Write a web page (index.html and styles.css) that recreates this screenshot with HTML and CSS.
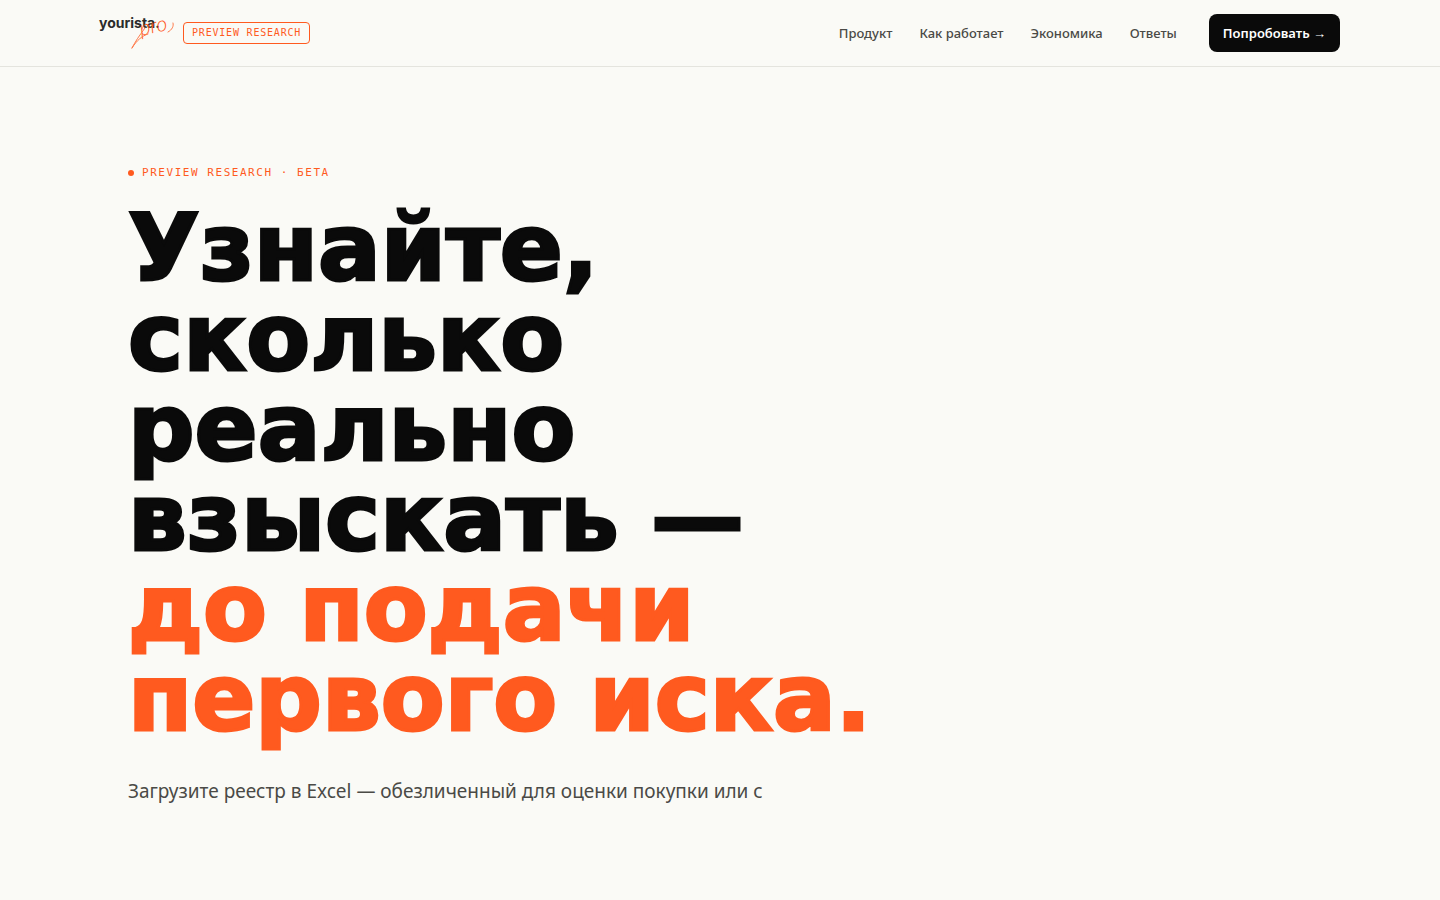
FILE: index.html
```html
<!DOCTYPE html>
<html lang="ru">
<head>
    <meta charset="UTF-8">
    <meta name="viewport" content="width=device-width, initial-scale=1.0">
    <title>yourista pro</title>
    <link rel="stylesheet" href="styles.css">
</head>
<body>
    <!-- Header -->
    <header class="header">
        <div class="header-inner">
            <div class="brand">
                <a href="#" class="brand-link" aria-label="yourista pro">
                    <svg class="logo" width="74" height="34" viewBox="0 0 74 34">
                        <text class="logo-name" x="-1" y="12">yourista.</text>
                        <g transform="rotate(-12 40 20)">
                            <text class="logo-pro" x="41" y="20">pro</text>
                        </g>
                        <path class="logo-stroke" d="M32 32C35 26 39 20 45 12M32 32C37 24 42 20 48 18M68 16C72 14 74 10 73 7"/>
                    </svg>
                </a>
                <span class="badge">PREVIEW RESEARCH</span>
            </div>
            <nav class="nav">
                <a href="#product">Продукт</a>
                <a href="#how">Как работает</a>
                <a href="#economics">Экономика</a>
                <a href="#faq">Ответы</a>
                <a href="#try" class="nav-button">Попробовать →</a>
            </nav>
        </div>
    </header>

    <!-- Hero -->
    <main class="hero">
        <p class="eyebrow"><span class="dot"></span>PREVIEW RESEARCH · БЕТА</p>
        <h1>
            Узнайте,<br>
            сколько<br>
            реально<br>
            взыскать —<br>
            <span class="accent">до подачи<br>
            первого иска.</span>
        </h1>
        <p class="lead">Загрузите реестр в Excel — обезличенный для оценки покупки или с</p>
    </main>
</body>
</html>
```

FILE: styles.css
```css
* {
    margin: 0;
    padding: 0;
    box-sizing: border-box;
}

body {
    font-family: 'Noto Sans', sans-serif;
    background: #fafaf6;
    color: #0a0a0a;
    min-height: 100vh;
}

a {
    color: inherit;
    text-decoration: none;
}

/* Header */
.header {
    border-bottom: 1px solid #e4e4de;
}

.header-inner {
    display: flex;
    justify-content: space-between;
    align-items: center;
    max-width: 1304px;
    margin: 0 auto;
    padding: 14px 32px;
}

.brand {
    display: flex;
    align-items: center;
    gap: 9px;
}

.logo {
    display: block;
    overflow: visible;
}

.logo-name {
    font-family: 'Inter', sans-serif;
    font-size: 14px;
    font-weight: 700;
    fill: #2b2b2b;
}

.logo-pro {
    font-family: 'Lato', sans-serif;
    font-size: 21px;
    font-style: italic;
    font-weight: 300;
    fill: #ff5a1f;
}

.logo-stroke {
    fill: none;
    stroke: #ff7a4a;
    stroke-width: 1;
    stroke-linecap: round;
}

.badge {
    padding: 0 8px;
    border: 1px solid #ff5a1f;
    border-radius: 4px;
    font-family: 'DejaVu Sans Mono', monospace;
    font-size: 10px;
    line-height: 20px;
    letter-spacing: 0.08em;
    color: #ff5a1f;
}

.nav {
    display: flex;
    align-items: center;
    gap: 27px;
    font-size: 13px;
    font-weight: 500;
    color: #4a4a46;
}

.nav-button {
    margin-left: 5px;
    padding: 0 14px;
    border-radius: 8px;
    background: #0a0a0a;
    color: #fff;
    font-weight: 600;
    line-height: 38px;
}

/* Hero */
.hero {
    max-width: 1248px;
    margin: 0 auto;
    padding: 96px 32px;
}

.eyebrow {
    display: flex;
    align-items: center;
    gap: 8px;
    margin-bottom: 20px;
    font-family: 'DejaVu Sans Mono', monospace;
    font-size: 11px;
    line-height: 20px;
    letter-spacing: 0.14em;
    color: #ff5a1f;
}

.dot {
    width: 6px;
    height: 6px;
    border-radius: 50%;
    background: #ff5a1f;
}

h1 {
    margin-bottom: 32px;
    font-family: 'DejaVu Sans', sans-serif;
    font-size: 93px;
    font-weight: 700;
    line-height: 90px;
    -webkit-text-stroke: 3px currentColor;
}

.accent {
    color: #ff5a1f;
}

.lead {
    font-size: 19px;
    line-height: 32px;
    color: #4a4a46;
}
```
